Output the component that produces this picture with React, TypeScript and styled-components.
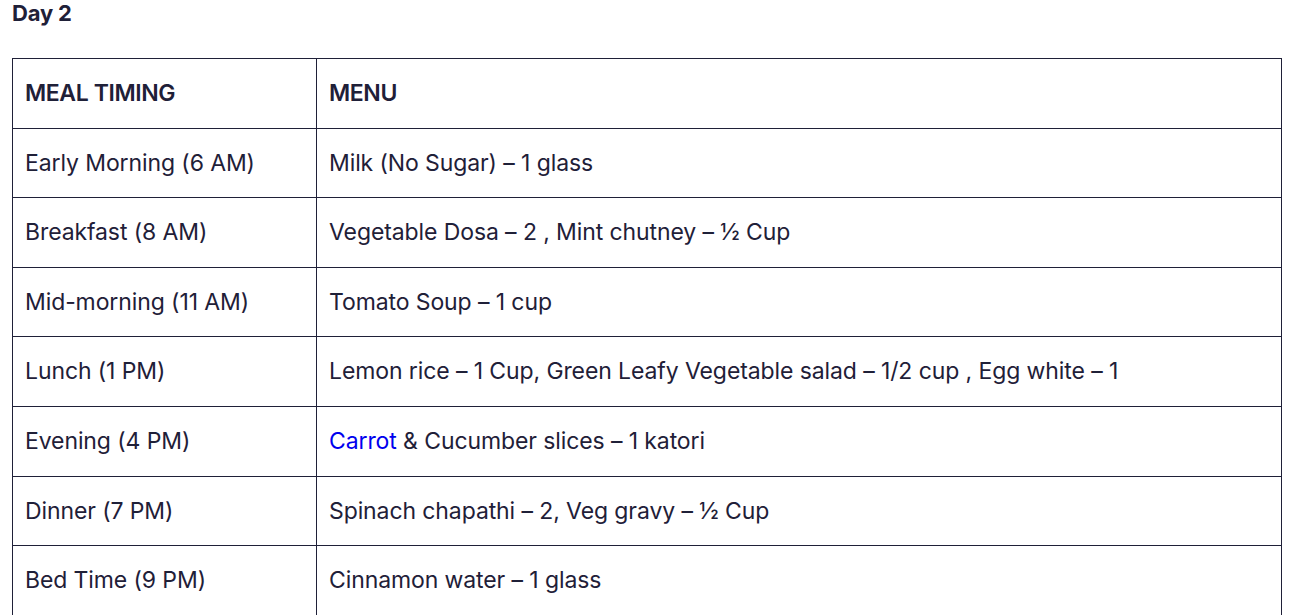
import React from "react";
import styled, { createGlobalStyle } from "styled-components";

const GlobalStyle = createGlobalStyle`
  body {
    margin: 0;
    background: #fff;
    font-family: Inter, "Noto Sans", sans-serif;
    color: #1f2038;
  }
`;

const Page = styled.div`
  padding: 0 16px 0 12px;
`;

const Title = styled.h3`
  margin: 0;
  font-size: 22px;
  line-height: 27px;
  font-weight: 700;
  letter-spacing: -0.2px;
`;

const Table = styled.table`
  margin-top: 31px;
  width: 1270px;
  border-collapse: collapse;
`;

const Cell = styled.td<{ $narrow?: boolean; $head?: boolean }>`
  width: ${(p) => (p.$narrow ? "278px" : "auto")};
  border: 1px solid #1f2038;
  padding: 20px 13px 20px 12px;
  font-size: 23px;
  line-height: 28.6px;
  text-align: left;
  font-weight: ${(p) => (p.$head ? 600 : 400)};
  letter-spacing: ${(p) => (p.$head ? "-0.4px" : "-0.1px")};
  white-space: nowrap;
`;

const Link = styled.a`
  color: #0000ee;
  text-decoration: none;
`;

const rows: { time: string; menu: React.ReactNode }[] = [
  { time: "Early Morning (6 AM)", menu: "Milk (No Sugar) – 1 glass" },
  { time: "Breakfast (8 AM)", menu: "Vegetable Dosa – 2 , Mint chutney – ½ Cup" },
  { time: "Mid-morning (11 AM)", menu: "Tomato Soup – 1 cup" },
  {
    time: "Lunch (1 PM)",
    menu: "Lemon rice – 1 Cup, Green Leafy Vegetable salad – 1/2 cup , Egg white – 1",
  },
  {
    time: "Evening (4 PM)",
    menu: (
      <>
        <Link href="#">Carrot</Link> &amp; Cucumber slices – 1 katori
      </>
    ),
  },
  { time: "Dinner (7 PM)", menu: "Spinach chapathi – 2, Veg gravy – ½ Cup" },
  { time: "Bed Time (9 PM)", menu: "Cinnamon water – 1 glass" },
];

const App = () => {
  return (
    <>
      <GlobalStyle />
      <Page>
        <Title>Day 2</Title>
        <Table>
          <thead>
            <tr>
              <Cell as="th" $narrow $head>
                MEAL TIMING
              </Cell>
              <Cell as="th" $head>
                MENU
              </Cell>
            </tr>
          </thead>
          <tbody>
            {rows.map((row) => (
              <tr key={row.time}>
                <Cell $narrow>{row.time}</Cell>
                <Cell>{row.menu}</Cell>
              </tr>
            ))}
          </tbody>
        </Table>
      </Page>
    </>
  );
};

export default App;
